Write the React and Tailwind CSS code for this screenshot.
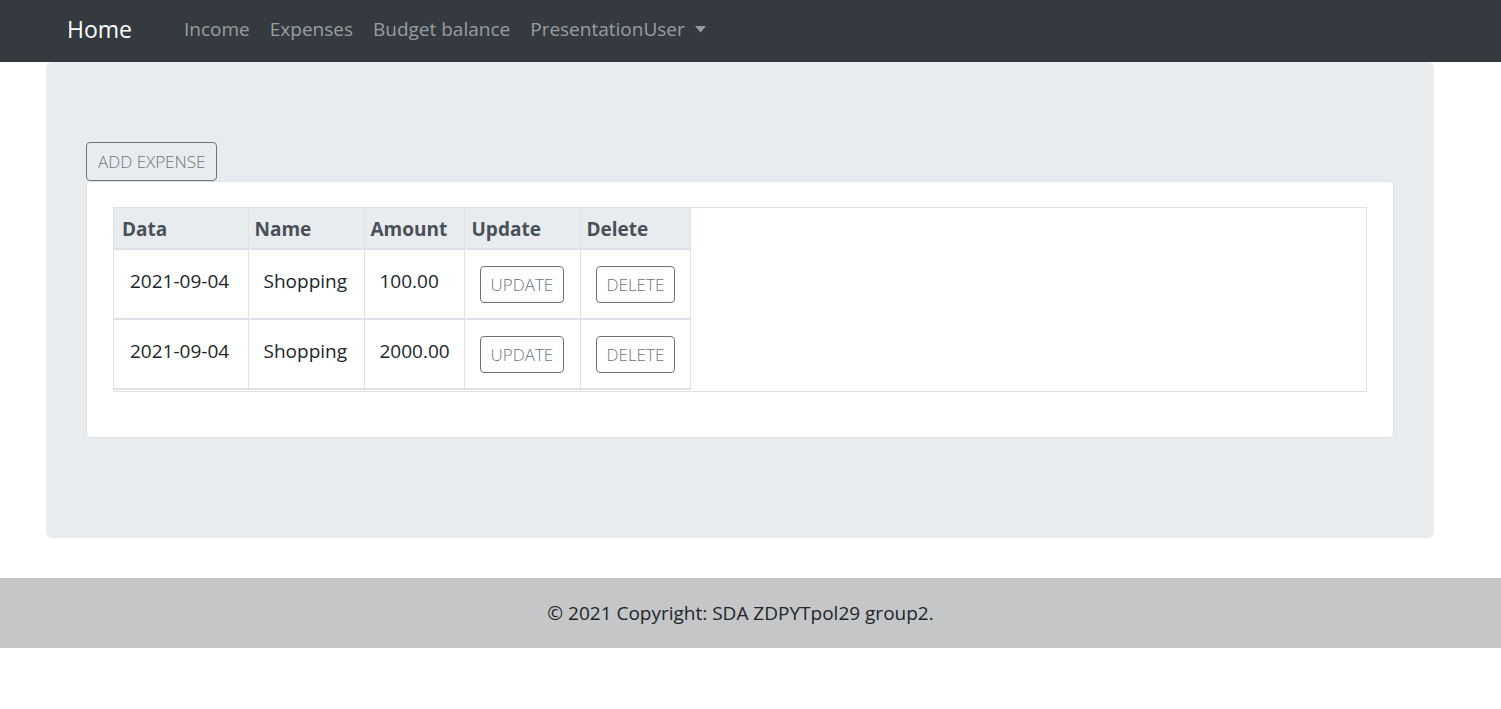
export default function App() {
  const rows = [
    { d: "2021-09-04", n: "Shopping", a: "100.00" },
    { d: "2021-09-04", n: "Shopping", a: "2000.00" },
  ];
  const btn =
    "h-[37px] px-[10px] border border-[#6c757d] rounded-[4px] text-[#6c757d] text-[17px] font-light uppercase leading-none bg-transparent";
  return (
    <div className="min-h-[709px] bg-white text-[#212529]" style={{ fontFamily: '"Open Sans", "Noto Sans", sans-serif' }}>
      <nav className="h-[62px] bg-[#343a40] flex items-center pl-[67px] pb-[4px]">
        <span className="text-white text-[23px] leading-none mr-[52px] mt-[1px]">Home</span>
        <div className="flex items-center gap-[20px] text-[19px] leading-none text-[#9a9da0]">
          <span>Income</span>
          <span>Expenses</span>
          <span>Budget balance</span>
          <span className="flex items-center gap-[10px]">
            PresentationUser
            <svg width="11" height="7" viewBox="0 0 11 7"><path d="M0 0h11L5.5 6.5z" fill="#9a9da0" /></svg>
          </span>
        </div>
      </nav>
      <div className="mx-[46px] w-[1388px] h-[476px] bg-[#e9ecef] rounded-[6px] pt-[80px] px-[40px]">
        <button className="h-[39px] px-[11px] border border-[#6c757d] rounded-[4px] text-[#6c757d] text-[17px] font-light uppercase">
          Add Expense
        </button>
        <div className="bg-white border border-[#dee2e6] rounded-[4px] h-[257px] pt-[25px] px-[26px]">
          <div className="border border-[#dee2e6] h-[185px]">
            <table className="border-collapse text-[19px]">
              <thead>
                <tr className="bg-[#e9ecef] text-[#495057] font-bold h-[41px]">
                  <th className="w-[134px] text-left px-[8px] pt-[3px] border-r border-b-2 border-[#dee2e6]">Data</th>
                  <th className="w-[116px] text-left px-[6px] pt-[3px] border-x border-b-2 border-[#dee2e6]">Name</th>
                  <th className="w-[100px] text-left px-[6px] pt-[3px] border-x border-b-2 border-[#dee2e6]">Amount</th>
                  <th className="w-[116px] text-left px-[7px] pt-[3px] border-x border-b-2 border-[#dee2e6]">Update</th>
                  <th className="w-[110px] text-left px-[6px] pt-[3px] border-x border-b-2 border-[#dee2e6]">Delete</th>
                </tr>
              </thead>
              <tbody>
                {rows.map((r, i) => (
                  <tr key={i} className="h-[70px] align-top">
                    <td className="pl-[16px] pt-[17px] border-r border-b-2 border-[#dee2e6]">{r.d}</td>
                    <td className="pl-[15px] pt-[17px] border-x border-b-2 border-[#dee2e6]">{r.n}</td>
                    <td className="pl-[15px] pt-[17px] border-x border-b-2 border-[#dee2e6]">{r.a}</td>
                    <td className="pl-[15px] pt-[16px] border-x border-b-2 border-[#dee2e6]">
                      <button className={btn}>Update</button>
                    </td>
                    <td className="pl-[15px] pt-[16px] border-x border-b-2 border-[#dee2e6]">
                      <button className={btn}>Delete</button>
                    </td>
                  </tr>
                ))}
              </tbody>
            </table>
          </div>
        </div>
      </div>
      <footer className="mt-[40px] h-[70px] bg-[#c5c6c8] flex items-center justify-center pr-[20px] text-[19px] text-[#212529]">
        © 2021 Copyright: SDA ZDPYTpol29 group2.
      </footer>
    </div>
  );
}
